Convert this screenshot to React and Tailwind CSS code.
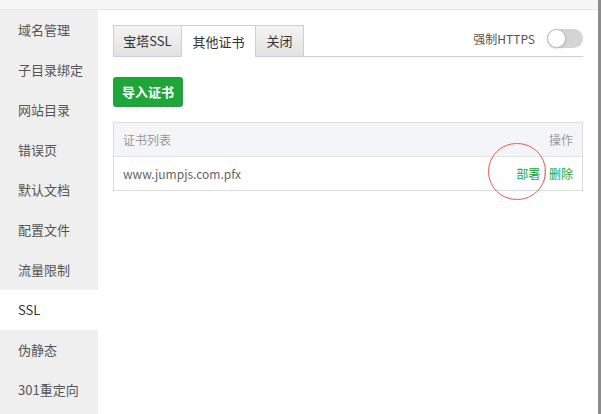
const MENU = ['域名管理', '子目录绑定', '网站目录', '错误页', '默认文档', '配置文件', '流量限制', 'SSL', '伪静态', '301重定向']

const FONT = { fontFamily: '"Noto Sans CJK SC", "Noto Sans", sans-serif' }

export default function App() {
  return (
    <div className="w-[601px] h-[414px] bg-white flex overflow-hidden" style={FONT}>
      <div className="flex-1 flex flex-col min-w-0">
        {/* top strip */}
        <div className="h-[10px] shrink-0 bg-[#f6f6f6] border-b border-[#e6e6e6]" />

        <div className="flex flex-1 min-h-0">
          {/* sidebar */}
          <div className="w-[98px] shrink-0 bg-[#efefef] flex flex-col">
            {MENU.map((m) => (
              <div
                key={m}
                className={`h-[40px] shrink-0 flex items-center pl-[18px] text-[13px] ${
                  m === 'SSL' ? 'bg-white text-[#333]' : 'text-[#555]'
                }`}
              >
                {m}
              </div>
            ))}
          </div>

          {/* main */}
          <div className="flex-1 pl-[15px] pr-[15px] pt-[15px]">
            {/* tabs */}
            <div className="flex items-end border-b border-[#cfcddb] h-[32px]">
              <div className="w-[69px] h-[32px] flex items-center justify-center text-[13px] text-[#333] border border-[#cfcddb] bg-gradient-to-b from-[#f4f4f4] to-[#e2e2e2] -mb-px">
                宝塔SSL
              </div>
              <div className="w-[73px] h-[32px] flex items-center justify-center text-[13px] text-[#333] border-t border-[#cfcddb] bg-white -mb-px">
                其他证书
              </div>
              <div className="w-[49px] h-[32px] flex items-center justify-center text-[13px] text-[#333] border border-[#cfcddb] bg-gradient-to-b from-[#f4f4f4] to-[#e2e2e2] -mb-px">
                关闭
              </div>
              <div className="flex-1 self-stretch flex items-center justify-end pb-[4px]">
                <span className="text-[12px] text-[#555] mr-[12px]">强制HTTPS</span>
                <div className="relative w-[36px] h-[19px] rounded-full bg-[#d4d4d4]">
                  <div className="absolute left-0 top-0 w-[19px] h-[19px] rounded-full bg-white border border-[#bdbdbd] shadow-sm" />
                </div>
              </div>
            </div>

            {/* button */}
            <div className="mt-[20px]">
              <button className="w-[70px] h-[30px] rounded-[3px] bg-[#20a53a] text-white text-[13px] font-bold">
                导入证书
              </button>
            </div>

            {/* table */}
            <div className="mt-[15px] border border-[#dddddd] w-[470px]">
              <div className="h-[34px] bg-[#f4f5f9] border-b border-[#e2e2e2] flex items-center justify-between px-[9px] text-[12px] text-[#999]">
                <span>证书列表</span>
                <span>操作</span>
              </div>
              <div className="relative h-[33px] flex items-center justify-between px-[9px]">
                <span className="text-[#666] text-[12px]">www.jumpjs.com.pfx</span>
                <span className="text-[#20a53a] text-[12px]">
                  部署 <span className="text-[#ccc]">|</span> 删除
                </span>
                <div className="absolute left-[374px] top-[-14px] w-[58px] h-[57px] rounded-full border border-[#f25555]" />
              </div>
            </div>
          </div>
        </div>
      </div>

      {/* scrollbar */}
      <div className="w-[3px] shrink-0 bg-[#8c8c8c]" />
    </div>
  )
}
